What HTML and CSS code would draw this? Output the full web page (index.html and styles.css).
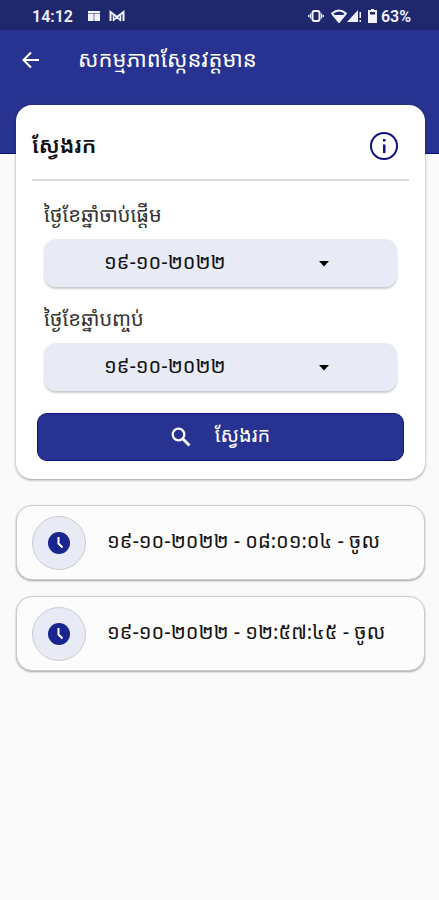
FILE: index.html
```html
<!DOCTYPE html>
<html lang="km">
<head>
    <meta charset="UTF-8" />
    <meta name="viewport" content="width=device-width, initial-scale=1.0"/>
    <title>សកម្មភាពស្កែនវត្តមាន</title>
    <link rel="stylesheet" href="styles.css">
</head>
<body>
<div class="status-bar">
    <span class="time">14:12</span>
    <svg class="notice" width="14" height="12" viewBox="0 0 14 12" fill="currentColor">
        <path d="M1 1h12v2H1zM1 3.500h5.700v7.500H1zM7.300 3.500H13v7.500H7.300z"/>
    </svg>
    <svg class="notice" width="16" height="12" viewBox="0 0 16 12" fill="none" stroke="currentColor">
        <path d="M1.500 11V2L8 7l6.500-5v9" stroke-width="2"/>
        <path d="M4.500 11V5M11.500 11V5M4 11l4-4 4 4" stroke-width="1.500"/>
    </svg>
    <span class="spacer"></span>
    <svg class="vibrate" width="16" height="12" viewBox="0 0 16 12" fill="none" stroke="currentColor">
        <rect x="4.500" y="1" width="7" height="10" rx="2" stroke-width="2"/>
        <path d="M2.500 3.500v5M13.500 3.500v5M.7 5v2M15.300 5v2" stroke-width="1.400"/>
    </svg>
    <svg width="16" height="14" viewBox="0 0 16 14">
        <path d="M1 4.500Q8-1.500 15 4.500L8 13z" fill="none" stroke="currentColor" stroke-width="2"/>
        <path d="M3 6h10L8 13z" fill="currentColor"/>
    </svg>
    <svg width="15" height="14" viewBox="0 0 15 14" fill="currentColor">
        <path d="M0 13L11 1v12zM12.500 3H14v6h-1.500zM12.500 11H14v2h-1.500z"/>
    </svg>
    <svg class="battery" width="9" height="14" viewBox="0 0 9 14">
        <path d="M3 0h3v1h3v13H0V1h3z" fill="currentColor"/>
        <path d="M2 3h5v2.500H2z" fill="#1f286d"/>
    </svg>
    <span class="percent">63%</span>
</div>

<header>
    <a href="#" class="back" aria-label="ត្រឡប់ក្រោយ">
        <svg width="18" height="18" viewBox="0 0 18 18" fill="none" stroke="currentColor" stroke-width="2">
            <path d="M17 9H2M9 1.500L1.500 9 9 16.500"/>
        </svg>
    </a>
    <h1>សកម្មភាពស្កែនវត្តមាន</h1>
</header>

<main>
    <form class="search-card">
        <div class="card-head">
            <h2>ស្វែងរក</h2>
            <button type="button" class="info" aria-label="ព័ត៌មាន">
                <svg width="30" height="30" viewBox="0 0 30 30">
                    <circle cx="15" cy="15" r="13" fill="none" stroke="currentColor" stroke-width="2"/>
                    <path d="M14 8h2.500v2.500H14zM14 13.500h2.500V22H14z" fill="currentColor"/>
                </svg>
            </button>
        </div>
        <div class="form-group">
            <label for="startDate">ថ្ងៃខែឆ្នាំចាប់ផ្តើម</label>
            <div class="select-box">
                <select id="startDate">
                    <option>១៩-១០-២០២២</option>
                </select>
                <svg width="10" height="6" viewBox="0 0 10 6"><path d="M0 0h10L5 5.500z"/></svg>
            </div>
        </div>
        <div class="form-group">
            <label for="endDate">ថ្ងៃខែឆ្នាំបញ្ចប់</label>
            <div class="select-box">
                <select id="endDate">
                    <option>១៩-១០-២០២២</option>
                </select>
                <svg width="10" height="6" viewBox="0 0 10 6"><path d="M0 0h10L5 5.500z"/></svg>
            </div>
        </div>
        <button type="submit" class="search-btn">
            <svg width="20" height="20" viewBox="0 0 20 20" fill="none" stroke="currentColor">
                <circle cx="7.500" cy="7.500" r="5.800" stroke-width="2.200"/>
                <path d="M11.500 11.500L18.500 18.500" stroke-width="2.800"/>
            </svg>
            <span>ស្វែងរក</span>
        </button>
    </form>

    <ul class="scan-list">
        <li>
            <span class="clock">
                <svg width="22" height="22" viewBox="0 0 22 22">
                    <circle cx="11" cy="11" r="11" fill="#1a2590"/>
                    <path d="M10.500 5v6.500l4 4" fill="none" stroke="#fff" stroke-width="2"/>
                </svg>
            </span>
            <span class="scan-text">១៩-១០-២០២២ - ០៨:០១:០៤ - ចូល</span>
        </li>
        <li>
            <span class="clock">
                <svg width="22" height="22" viewBox="0 0 22 22">
                    <circle cx="11" cy="11" r="11" fill="#1a2590"/>
                    <path d="M10.500 5v6.500l4 4" fill="none" stroke="#fff" stroke-width="2"/>
                </svg>
            </span>
            <span class="scan-text">១៩-១០-២០២២ - ១២:៥៧:៤៥ - ចូល</span>
        </li>
    </ul>
</main>
</body>
</html>
```
FILE: styles.css
```css
* {
    box-sizing: border-box;
}

body {
    font-family: "Noto Sans Khmer", "Khmer OS", "Noto Sans", sans-serif;
    margin: 0;
    background-color: #fafafa;
    color: #111;
    font-size: 20px;
}

svg {
    display: block;
    flex-shrink: 0;
}

.status-bar {
    display: flex;
    align-items: center;
    height: 30px;
    padding: 2px 28px 0 32px;
    background-color: #1f286d;
    color: #f2f2ff;
    font-family: Roboto, sans-serif;
    font-size: 16px;
    font-weight: 600;
}

.time {
    margin-right: 6px;
}

.notice {
    margin-left: 8px;
}

.spacer {
    flex-grow: 1;
}

.vibrate {
    margin-right: 7px;
}

.battery {
    margin: 0 4px 0 6px;
}

header {
    display: flex;
    align-items: flex-start;
    height: 124px;
    padding: 10px 22px;
    background-color: #283391;
    border-bottom: 1px solid #10107e;
    color: white;
}

.back {
    display: flex;
    align-items: center;
    height: 40px;
    color: white;
}

h1 {
    margin: 0 0 0 38px;
    font-size: 22px;
    font-weight: 400;
    line-height: 36px;
}

main {
    margin-top: -49px;
    padding: 0 14px 24px 16px;
}

.search-card {
    padding: 16px 16px 18px;
    background-color: white;
    border-radius: 16px;
    box-shadow: 0 1px 3px rgba(0,0,0,0.4);
}

.card-head {
    display: flex;
    align-items: center;
    justify-content: space-between;
    height: 60px;
    margin-bottom: 2px;
    padding-right: 10px;
    padding-bottom: 8px;
    border-bottom: 2px solid #d9d9d9;
}

h2 {
    margin: 0;
    padding-bottom: 4px;
    font-size: 22px;
    font-weight: 600;
}

.info {
    padding: 0;
    border: none;
    background: none;
    color: #10107e;
    cursor: pointer;
}

.form-group {
    padding: 12px 12px 0;
}

.form-group label {
    display: block;
    height: 44px;
    line-height: 40px;
    color: #333;
}

.select-box {
    position: relative;
}

.select-box svg {
    position: absolute;
    right: 68px;
    top: 22px;
    pointer-events: none;
}

select {
    display: block;
    width: 100%;
    height: 48px;
    padding: 0 60px 4px;
    border: none;
    border-radius: 12px;
    background-color: #e8eaf6;
    box-shadow: 0 2px 2px rgba(0,0,0,0.2);
    appearance: none;
    color: #111;
    font-family: inherit;
    font-size: 20px;
}

.search-btn {
    display: flex;
    align-items: center;
    justify-content: center;
    gap: 24px;
    width: calc(100% - 10px);
    height: 48px;
    margin: 22px 5px 0;
    padding: 0;
    border: 1px solid #10107e;
    border-radius: 10px;
    background-color: #283391;
    color: white;
    font-family: inherit;
    font-size: 20px;
    cursor: pointer;
}

.search-btn span {
    padding-bottom: 6px;
}

.scan-list {
    display: flex;
    flex-direction: column;
    gap: 16px;
    margin: 26px 0 0;
    padding: 0;
    list-style: none;
}

.scan-list li {
    display: flex;
    align-items: center;
    gap: 21px;
    height: 75px;
    padding: 0 15px;
    border: 1px solid #ccc;
    border-radius: 16px;
    background-color: #fcfcfc;
    box-shadow: 0 1px 2px rgba(0,0,0,0.35);
    white-space: nowrap;
}

.scan-text {
    padding-bottom: 4px;
}

.clock {
    display: flex;
    align-items: center;
    justify-content: center;
    width: 54px;
    height: 54px;
    border: 1px solid #ccc;
    border-radius: 50%;
    background-color: #e8eaf6;
}
```
